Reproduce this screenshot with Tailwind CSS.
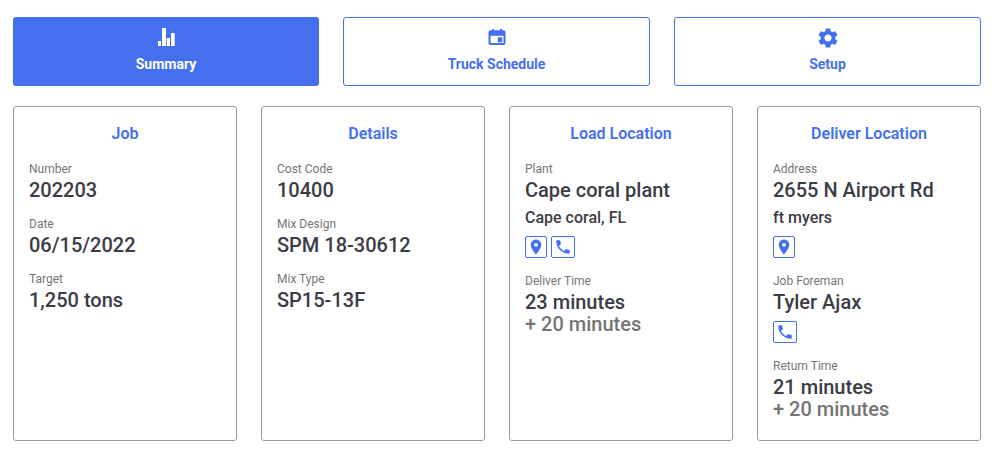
<!DOCTYPE html>
<html>
<head>
<meta charset="utf-8">
<script src="https://cdn.jsdelivr.net/npm/@tailwindcss/browser@4"></script>
</head>
<body class="bg-white font-['Roboto',sans-serif] text-[#3c3c46]">
<main class="pt-[17px] pl-[13px] pr-[16px] w-[997px] h-[456px] overflow-hidden">
  <!-- Tabs -->
  <div class="grid grid-cols-[306px_307px_307px] gap-6 h-[69px]">
    <button class="flex flex-col items-center rounded-[3px] bg-[#4470f0] text-white pt-[9px]">
      <svg class="w-6 h-6" viewBox="0 0 24 24" fill="currentColor"><path d="M4 15h3v5H4zM8 2h4v18H8zM12.7 12H16v8h-3.3zM17 7h3.7v13H17z"/></svg>
      <span class="text-sm font-bold mt-[4px]">Summary</span>
    </button>
    <button class="flex flex-col items-center rounded-[3px] border border-[#4470f0] text-[#4470f0] pt-[8px]">
      <svg class="w-6 h-6" viewBox="0 0 24 24" fill="currentColor"><path fill-rule="evenodd" d="M7 3h2v1.200h6V3h2v1.200h1.500c1.100 0 2 .9 2 2V17c0 1.100-.9 2-2 2h-13c-1.100 0-2-.9-2-2V6.200c0-1.100.9-2 2-2H7zM5.500 9.700V17h13V9.700zM12.800 11.300h4.400v5h-4.400z"/></svg>
      <span class="text-sm font-bold mt-[4px]">Truck Schedule</span>
    </button>
    <button class="flex flex-col items-center rounded-[3px] border border-[#4470f0] text-[#4470f0] pt-[8px]">
      <svg class="w-6 h-6" viewBox="0 0 24 24" fill="currentColor"><path d="M19.14 12.94c.04-.3.06-.61.06-.94 0-.32-.02-.64-.07-.94l2.03-1.58c.18-.14.23-.41.12-.61l-1.920-3.320c-.12-.22-.37-.29-.59-.22l-2.390.96c-.5-.38-1.030-.7-1.620-.94l-.36-2.540c-.04-.24-.24-.41-.48-.41h-3.840c-.24 0-.43.17-.47.41l-.36 2.540c-.59.24-1.130.57-1.620.94l-2.390-.96c-.22-.08-.47 0-.59.22L2.740 8.870c-.12.21-.08.47.12.61l2.030 1.580c-.05.3-.09.63-.09.94s.02.64.07.94l-2.030 1.580c-.18.14-.23.41-.12.61l1.920 3.320c.12.22.37.29.59.22l2.390-.96c.5.38 1.030.7 1.620.94l.36 2.540c.05.24.24.41.48.41h3.840c.24 0 .44-.17.47-.41l.36-2.540c.59-.24 1.130-.56 1.620-.94l2.390.96c.22.08.47 0 .59-.22l1.920-3.320c.12-.22.07-.47-.12-.61l-2.010-1.580zM12 15.600c-1.980 0-3.600-1.620-3.600-3.600s1.620-3.600 3.600-3.600 3.600 1.620 3.600 3.600-1.620 3.600-3.600 3.600z"/></svg>
      <span class="text-sm font-bold mt-[4px]">Setup</span>
    </button>
  </div>

  <!-- Cards -->
  <div class="grid grid-cols-4 gap-6 mt-5 h-[335px]">
    <section class="rounded-[3px] border border-[#9a9a9a] px-[15px] pt-[18px]">
      <h3 class="text-base leading-[18px] font-semibold text-center text-[#4470f0] mb-[19px]">Job</h3>
      <div class="text-xs leading-[14px] text-[#757575]">Number</div>
      <div class="text-xl leading-[24px] font-medium mt-[2px]">202203</div>
      <div class="text-xs leading-[14px] text-[#757575] mt-[15px]">Date</div>
      <div class="text-xl leading-[24px] font-medium mt-[2px]">06/15/2022</div>
      <div class="text-xs leading-[14px] text-[#757575] mt-[15px]">Target</div>
      <div class="text-xl leading-[24px] font-medium mt-[2px]">1,250 tons</div>
    </section>

    <section class="rounded-[3px] border border-[#9a9a9a] px-[15px] pt-[18px]">
      <h3 class="text-base leading-[18px] font-semibold text-center text-[#4470f0] mb-[19px]">Details</h3>
      <div class="text-xs leading-[14px] text-[#757575]">Cost Code</div>
      <div class="text-xl leading-[24px] font-medium mt-[2px]">10400</div>
      <div class="text-xs leading-[14px] text-[#757575] mt-[15px]">Mix Design</div>
      <div class="text-xl leading-[24px] font-medium mt-[2px]">SPM 18-30612</div>
      <div class="text-xs leading-[14px] text-[#757575] mt-[15px]">Mix Type</div>
      <div class="text-xl leading-[24px] font-medium mt-[2px]">SP15-13F</div>
    </section>

    <section class="rounded-[3px] border border-[#9a9a9a] px-[15px] pt-[18px]">
      <h3 class="text-base leading-[18px] font-semibold text-center text-[#4470f0] mb-[19px]">Load Location</h3>
      <div class="text-xs leading-[14px] text-[#757575]">Plant</div>
      <div class="text-xl leading-[24px] font-medium mt-[2px]">Cape coral plant</div>
      <div class="text-base leading-[20px] font-medium mt-[6px]">Cape coral, FL</div>
      <div class="flex gap-[4px] mt-[8px]">
        <span class="flex items-center justify-center w-[22px] h-[22px] rounded-[2px] border border-[#4470f0] text-[#4470f0]">
          <svg class="w-[18px] h-[18px]" viewBox="0 0 24 24" fill="currentColor"><path d="M12 2C8.130 2 5 5.130 5 9c0 5.250 7 13 7 13s7-7.750 7-13c0-3.870-3.130-7-7-7zm0 9.500a2.500 2.500 0 0 1 0-5 2.500 2.500 0 0 1 0 5z"/></svg>
        </span>
        <span class="flex items-center justify-center w-[24px] h-[22px] rounded-[2px] border border-[#4470f0] text-[#4470f0]">
          <svg class="w-[18px] h-[18px]" viewBox="0 0 24 24" fill="currentColor"><path d="M6.620 10.790c1.440 2.830 3.760 5.140 6.590 6.590l2.200-2.200c.27-.27.67-.36 1.020-.24 1.120.37 2.330.57 3.570.57.55 0 1 .45 1 1V20c0 .55-.45 1-1 1-9.390 0-17-7.610-17-17 0-.55.45-1 1-1h3.500c.55 0 1 .45 1 1 0 1.250.2 2.450.57 3.570.11.35.03.74-.25 1.020l-2.200 2.200z"/></svg>
        </span>
      </div>
      <div class="text-xs leading-[14px] text-[#757575] mt-[16px]">Deliver Time</div>
      <div class="text-xl leading-[22px] font-medium mt-[3px]">23 minutes</div>
      <div class="text-xl leading-[22px] font-medium text-[#757575]">+ 20 minutes</div>
    </section>

    <section class="rounded-[3px] border border-[#9a9a9a] px-[15px] pt-[18px]">
      <h3 class="text-base leading-[18px] font-semibold text-center text-[#4470f0] mb-[19px]">Deliver Location</h3>
      <div class="text-xs leading-[14px] text-[#757575]">Address</div>
      <div class="text-xl leading-[24px] font-medium mt-[2px]">2655 N Airport Rd</div>
      <div class="text-base leading-[20px] font-medium mt-[6px]">ft myers</div>
      <div class="flex gap-[4px] mt-[8px]">
        <span class="flex items-center justify-center w-[22px] h-[22px] rounded-[2px] border border-[#4470f0] text-[#4470f0]">
          <svg class="w-[18px] h-[18px]" viewBox="0 0 24 24" fill="currentColor"><path d="M12 2C8.130 2 5 5.130 5 9c0 5.250 7 13 7 13s7-7.750 7-13c0-3.870-3.130-7-7-7zm0 9.500a2.500 2.500 0 0 1 0-5 2.500 2.500 0 0 1 0 5z"/></svg>
        </span>
      </div>
      <div class="text-xs leading-[14px] text-[#757575] mt-[16px]">Job Foreman</div>
      <div class="text-xl leading-[24px] font-medium mt-[2px]">Tyler Ajax</div>
      <div class="flex gap-[4px] mt-[7px]">
        <span class="flex items-center justify-center w-[24px] h-[22px] rounded-[2px] border border-[#4470f0] text-[#4470f0]">
          <svg class="w-[18px] h-[18px]" viewBox="0 0 24 24" fill="currentColor"><path d="M6.620 10.790c1.440 2.830 3.760 5.140 6.590 6.590l2.200-2.200c.27-.27.67-.36 1.020-.24 1.120.37 2.330.57 3.570.57.55 0 1 .45 1 1V20c0 .55-.45 1-1 1-9.390 0-17-7.610-17-17 0-.55.45-1 1-1h3.500c.55 0 1 .45 1 1 0 1.250.2 2.450.57 3.570.11.35.03.74-.25 1.020l-2.200 2.200z"/></svg>
        </span>
      </div>
      <div class="text-xs leading-[14px] text-[#757575] mt-[16px]">Return Time</div>
      <div class="text-xl leading-[22px] font-medium mt-[3px]">21 minutes</div>
      <div class="text-xl leading-[22px] font-medium text-[#757575]">+ 20 minutes</div>
    </section>
  </div>
</main>
</body>
</html>
